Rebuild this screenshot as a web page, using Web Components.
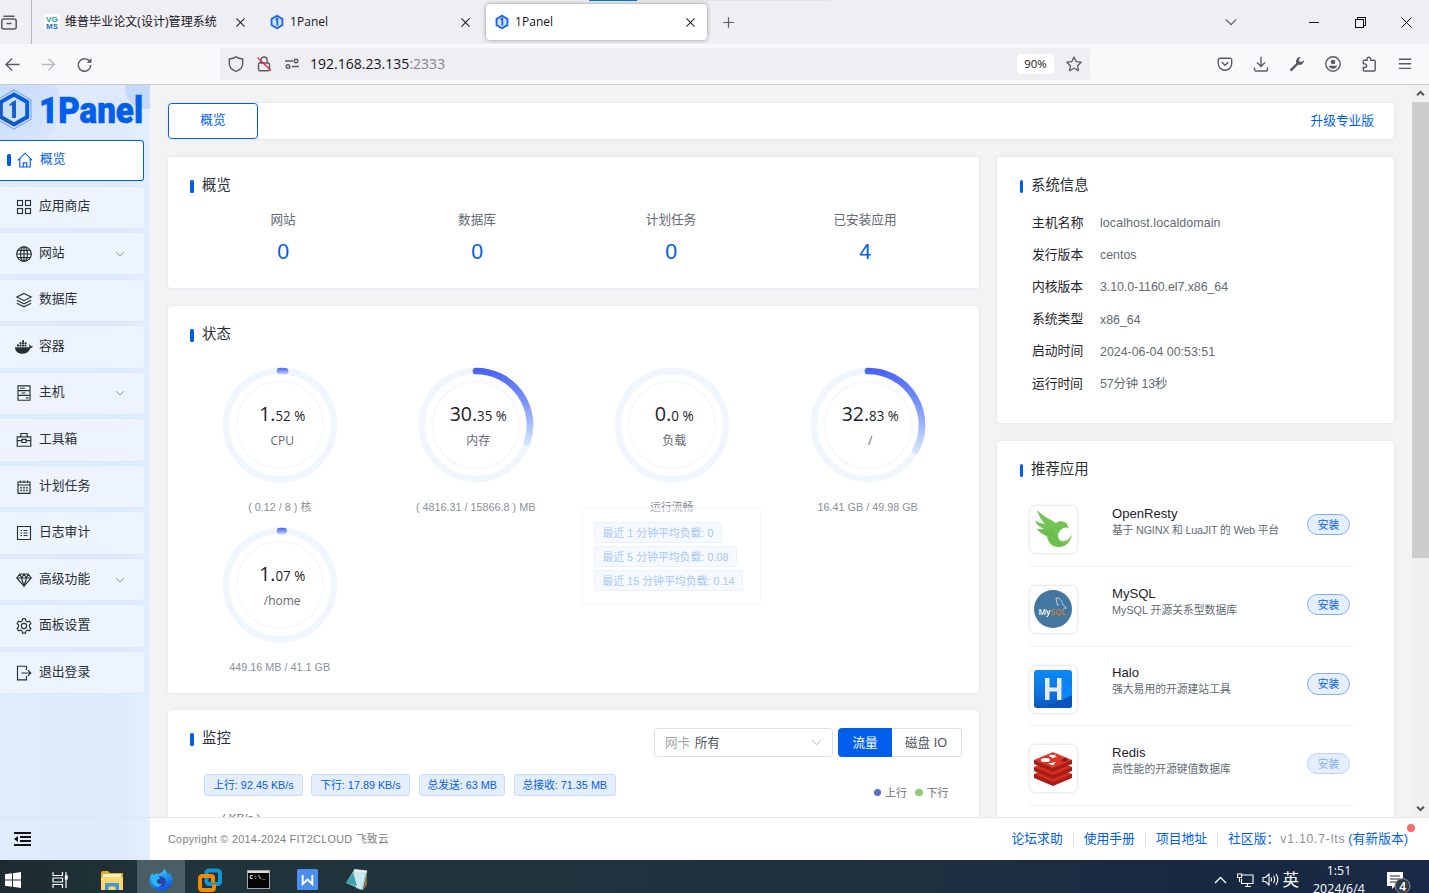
<!DOCTYPE html>
<html lang="zh-CN">
<head>
<meta charset="utf-8">
<title>1Panel</title>
<style>
html,body{margin:0;height:100%;overflow:hidden}
body{display:flex;flex-direction:column;height:893px;width:1429px;background:#f3f3f3;font:12.6px/1 "Liberation Sans","Noto Sans CJK SC",sans-serif;color:#1f2329}
</style>
</head>
<body>
<browser-tabs></browser-tabs>
<browser-toolbar></browser-toolbar>
<panel-app></panel-app>
<win-taskbar></win-taskbar>
<script>
const UI='"Open Sans","Noto Sans CJK SC",sans-serif';
class Base extends HTMLElement{
  connectedCallback(){
    if(this.shadowRoot)return;
    const t=document.createElement('template');
    t.innerHTML='<style>*{box-sizing:border-box}svg{display:block}'+this.css()+'</style>'+this.html();
    this.attachShadow({mode:'open'}).append(t.content.cloneNode(true));
  }
  a(n,d=''){return this.getAttribute(n)??d}
}
const define=(n,css,html)=>customElements.define(n,class extends Base{css(){return typeof css==='function'?css.call(this):css}html(){return html.call(this)}});

const ICONS={
  close:'<path d="M3 3l10 10M13 3L3 13" stroke-width="1.3"/>',
  plus:'<path d="M8 1.500v13M1.500 8h13"/>',
  chev:'<path d="M2 5l6 6 6-6"/>',
  view:'<rect x=".8" y="5" width="14.4" height="10" rx="2"/><path d="M2.5 2.2h11M5.5 9.5h5" />',
  back:'<path d="M15.500 8H1M7.700 1.500L1 8l6.700 6.500"/>',
  fwd:'<path d="M1 8h13.500M8 1.800L14.400 8 8 14.200"/>',
  reload:'<path d="M14 5.800A6.600 6.600 0 1 0 14.600 8.600"/><path d="M15.300 1.200v5h-5z" fill="currentColor" stroke="none"/>',
  shield:'<path d="M8 .9C6 2.300 3.600 2.800 1.300 3v4.500C1.300 11 4.500 14 8 15.300c3.500-1.300 6.700-4.300 6.700-7.800V3C12.400 2.800 10 2.300 8 .9z"/>',
  lock:'<rect x="2.500" y="7" width="11" height="7.800" rx="1.500"/><path d="M4.800 7V4.200a3.200 3.200 0 0 1 6.400 0V7"/><path d="M1.500 1.500l13.500 13" stroke="#e22850"/>',
  perm:'<path d="M1 5h8M8 10.500h7"/><circle cx="12" cy="5" r="1.800"/><circle cx="4" cy="10.500" r="1.800"/>',
  star:'<path d="M8 1l2.200 4.600 5 .6-3.700 3.500 1 5L8 12.200l-4.500 2.500 1-5L.8 6.200l5-.6z" stroke-linejoin="round"/>',
  pocket:'<path d="M3 2.200h10a1.700 1.700 0 0 1 1.700 1.700V7.500a6.700 6.700 0 0 1-13.400 0V3.900A1.700 1.700 0 0 1 3 2.200z"/><path d="M4.700 6.300L8 9.300l3.300-3" stroke-width="1.500"/>',
  down:'<path d="M8 .8v9.500M4 6.500l4 4 4-4M1.500 11.500v2q0 1.500 1.500 1.500h10q1.500 0 1.500-1.500v-2"/>',
  wrench:'<path d="M1.500 14.700L9 7.200" stroke-width="2.400"/><path d="M15 4.200a4.400 4.400 0 0 1-6 4.400L7.300 7A4.400 4.400 0 0 1 11.900 1L9.900 3.400l.5 2 2 .5z" fill="currentColor" stroke="none"/>',
  user:'<circle cx="8" cy="8" r="7.200"/><circle cx="8" cy="6" r="2.300" fill="currentColor" stroke="none"/><path d="M3.800 9.800h8.400q-1 3-4.200 3t-4.200-3z" fill="currentColor" stroke="none"/>',
  ext:'<path d="M6 4.200V3a1.800 1.800 0 0 1 3.600 0v1.200H13a1.200 1.200 0 0 1 1.200 1.200v8.400A1.200 1.200 0 0 1 13 15H3.500a1.200 1.200 0 0 1-1.200-1.200v-2.300h1.500a1.800 1.800 0 0 0 0-3.600H2.300V5.400a1.200 1.200 0 0 1 1.200-1.200z"/>',
  burger:'<path d="M1.800 3.200h12.400M1.800 7.800h12.400M1.800 12.400h12.400"/>',
  home:'<path d="M.8 8.300L8 1.200l7.200 7.100M2.800 6.500V15h10.400V6.500M6.300 15v-4.200h3.400V15"/>',
  grid:'<rect x="1.500" y="1.500" width="5" height="5"/><rect x="9.500" y="1.500" width="5" height="5"/><rect x="1.500" y="9.500" width="5" height="5"/><rect x="9.500" y="9.500" width="5" height="5"/>',
  globe:'<circle cx="8" cy="8" r="7.300"/><ellipse cx="8" cy="8" rx="3.500" ry="7.300"/><path d="M8 .7v14.600M.7 8h14.600M1.800 4.400h12.400M1.800 11.600h12.400"/>',
  layers:'<path d="M8 1.500l7.200 3.600L8 8.700.8 5.100zM.8 8.200L8 11.800l7.200-3.600M.8 11.200L8 14.800l7.200-3.600"/>',
  docker:'<path d="M-1 8.300h14.500c0-1-.7-2 0-3 1 .5 1.200 1.400 1.200 2 .8-.2 1.600-.1 2.200.3-.5 1.100-1.500 1.600-2.700 1.600C13 13 10.300 14.800 6.400 14.800 2 14.800-1 12.400-1 8.300z" fill="currentColor" stroke="none"/><path d="M1 5.500h2v2H1zM3.500 5.500h2v2h-2zM6 5.500h2v2H6zM8.500 5.500h2v2h-2zM3.500 3.300h2v1.700h-2zM6 3.300h2v1.700H6zM8.500 3.300h2v1.700h-2zM6 1.300h2V3H6z" fill="currentColor" stroke="none"/>',
  server:'<path d="M2 .8h12v14.400H2zM2 5.600h12M2 10.400h12M4 3.200h5M5.500 8h4M10 12.800h2.500"/>',
  box:'<path d="M1.200 4.800h13.600v9.400H1.200zM4.800 4.500V1.500h6.400v3M1.200 8.600h4.600M10.200 8.600h4.600M6 7.300h4v3.200H6z"/>',
  cal:'<path d="M2 3h12v11.300H2zM2 6h12M4.500 1.500V4M8 1.500V4M11.500 1.500V4"/><path d="M4.200 8.800h1.600M7.200 8.800h1.600M10.200 8.800h1.600M4.200 11.500h1.600M7.200 11.500h1.600M10.200 11.500h1.600" stroke-width="1.400"/>',
  log:'<path d="M1.500 1.500h13v13h-13z"/><path d="M4.500 5.500H6M7.500 5.500h4M4.500 8H6M7.500 8h4M4.500 10.500H6M7.500 10.500h4"/>',
  gem:'<path d="M3.800 2h8.400l3 4L8 14.200.8 6zM.8 6h14.400M3.800 2l1.700 4L8 14l2.500-8 1.700-4M5.500 6L8 2l2.500 4"/>',
  gear:'<path d="M6.600.9h2.800l.5 2.100 1.500.9 2.100-.7 1.400 2.400L13.400 7v2l1.500 1.400-1.400 2.400-2.100-.7-1.500.9-.5 2.100H6.600L6.100 13l-1.500-.9-2.100.7-1.400-2.400L2.600 9V7L1.100 5.600l1.400-2.400 2.100.7L6.100 3z"/><circle cx="8" cy="8" r="2.600"/>',
  exit:'<path d="M10.500 5V1.200h-9v13.600h9V11M5.500 8h9.300M12 5.200L14.800 8 12 10.800"/>',
  hex:'<path d="M8 .2l6.900 3.900v7.800L8 15.800l-6.900-3.900V4.100z" fill="#cfe0fa" stroke="none"/><path d="M8 1.800l5.400 3.100v6.200L8 14.200l-5.400-3.100V4.900z" stroke="#1663ea" stroke-width="1.700"/><path d="M6.500 5.500L8.300 4.600V11.500" stroke="#1663ea" stroke-width="1.800"/>'
};
define('ui-icon',function(){const s=this.a('s','16');return `:host{display:block;flex:none;width:${s}px;height:${s}px;overflow:visible}svg{overflow:visible}`},
 function(){const s=this.a('s','16');return `<svg width="${s}" height="${s}" viewBox="0 0 16 16" fill="none" stroke="currentColor" stroke-width="${this.a('w','1.2')}">${ICONS[this.a('n')]}</svg>`});

define('browser-tab',`:host{display:flex;align-items:center;height:36px;width:222px;border-radius:4px;padding:0 10px 0 9px;font:12px/16px ${UI};color:#15141a}
:host([active]){background:#fff;box-shadow:0 0 4px rgba(0,0,0,.4)}
span{flex:1;margin-left:5px;white-space:nowrap;letter-spacing:.05px}slot{display:block}ui-icon{color:#222}`,
 function(){return `<slot name="icon"><ui-icon n="hex" s="16"></ui-icon></slot><span><slot></slot></span><ui-icon n="close" s="13" w="1.4"></ui-icon>`});

define('vgms-icon',`:host{display:block;width:16px;height:16px;background:#fff;border-radius:3px}text{font:bold 8px "Liberation Sans",sans-serif}`,
 function(){return `<svg width="16" height="16"><text x="2" y="7.500" fill="#20a0a4" textLength="12" lengthAdjust="spacingAndGlyphs">VG</text><text x="2" y="14.500" fill="#2277c0" textLength="12" lengthAdjust="spacingAndGlyphs">MS</text></svg>`});

define('browser-tabs',`:host{display:flex;height:44px;flex:none;background:#efeef3;position:relative;align-items:center;color:#5b5b66}
.v{width:32px;height:44px;border-right:1px solid #b9b8be;display:flex;align-items:center;padding-left:1px;margin-right:3px}
.plus{margin-left:15px}.sp{flex:1}.w{color:#111;display:flex;margin-left:71px;margin-right:17px}
.w svg{shape-rendering:crispEdges}
.top{position:absolute;left:589px;top:0;width:241px;height:1px;background:#e2e2e4}.top i{display:block;width:48px;height:1px;background:#0078d7}
browser-tab+browser-tab{margin-left:3px}`,
 function(){return `<div class="top"><i></i></div><div class="v"><ui-icon n="view" s="16" w="1.500"></ui-icon></div>
<browser-tab style="width:222px">
<vgms-icon slot="icon"></vgms-icon>维普毕业论文(设计)管理系统</browser-tab><browser-tab>1Panel</browser-tab><browser-tab active style="margin-left:4px;width:221px;padding-left:8px">1Panel</browser-tab>
<ui-icon class="plus" n="plus" s="13" w="1.500"></ui-icon><div class="sp"></div><ui-icon n="chev" s="14" w="1.500"></ui-icon>
<div class="w"><svg width="10" height="11"><path d="M0 5.500h10" stroke="#111"/></svg><svg style="margin-left:36px" width="11" height="11" fill="none" stroke="#111"><path d="M.5 2.500h7.500v8H.5zM2.500 2.500v-2h8v8H8"/></svg><svg width="11" height="11" stroke="#111" style="shape-rendering:auto;margin-left:35px"><path d="M.5.5l10 10M10.500.5l-10 10"/></svg></div>`});

define('browser-toolbar',`:host{display:flex;height:40px;flex:none;background:#f9f9fb;border-bottom:1px solid #ccccd1;align-items:center;color:#5b5b66;padding:0 16px 0 5px}
.nav{display:flex;gap:20px;width:215px}.f{opacity:.4}
.url{display:flex;align-items:center;width:870px;height:32px;border-radius:4px;background:#efeef3;padding:0 8px;gap:12px;font:14px/20px ${UI};color:#15141a;box-sizing:border-box}
.url ui-icon{color:#5b5b66}.t{flex:1;margin-left:-2px;letter-spacing:.02px;margin-top:-1px}.t span{color:#85848d}
.z{background:#fff;border-radius:3px;width:37px;height:20px;font-size:11.300px;line-height:19px;text-align:center}
.r{margin-left:auto;display:flex;gap:20px;margin-right:0}`,
 function(){return `<div class="nav"><ui-icon n="back" s="15" w="1.500"></ui-icon><ui-icon class="f" n="fwd" s="15" w="1.500" style="margin-left:1px"></ui-icon><ui-icon n="reload" s="15" w="1.500" style="margin-left:1px"></ui-icon></div>
<div class="url"><ui-icon n="shield" w="1.400"></ui-icon><ui-icon n="lock" w="1.400"></ui-icon><ui-icon n="perm" w="1.400"></ui-icon><div class="t">192.168.23.135<span>:2333</span></div><div class="z">90%</div><ui-icon n="star" w="1.300"></ui-icon></div>
<div class="r">${['pocket','down','wrench','user','ext','burger'].map(n=>`<ui-icon n="${n}" w="1.400"></ui-icon>`).join('')}</div>`});

define('menu-item',`:host{display:flex;align-items:center;width:144px;height:41.400px;margin-bottom:5.160px;background:#edf4ff;border-radius:0 3.600px 3.600px 0;padding-left:16px;color:#2b2f36;box-shadow:0 0 3px rgba(0,94,235,.05)}
span{margin-left:7px;flex:1;font-size:12.800px;line-height:18px;position:relative;top:-1px}
.c{margin-right:19px;color:#60656e}
:host([active]){background:#fff;border:1px solid #005eeb;border-left:0;color:#005eeb;padding-left:7px;padding-bottom:1.500px}
:host([active]) ui-icon{margin-left:6px}i{display:none}:host([active]) i{display:block;width:4px;height:12px;border-radius:1.500px;background:#005eeb}`,
 function(){return `<i></i><ui-icon n="${this.a('icon')}" w="1.150"></ui-icon><span><slot></slot></span>${this.hasAttribute('sub')?'<ui-icon class="c" n="chev" s="10"></ui-icon>':''}`});

define('panel-logo',`:host{display:block;height:55px;width:150px}text{font:900 36px Roboto,"Open Sans",sans-serif}`,
 function(){return `<svg width="150" height="55"><defs><linearGradient id="c" x1="0" y1="0" x2="1" y2="1"><stop offset="0" stop-color="#b7d1fa"/><stop offset="1" stop-color="#dfeafc"/></linearGradient><linearGradient id="h" x1="1" y1="0" x2="0" y2="1"><stop offset="0" stop-color="#005eeb"/><stop offset="1" stop-color="#1858b8"/></linearGradient></defs>
<circle cx="5" cy="19" r="55" fill="url(#c)"/><circle cx="146" cy="3" r="21" fill="#c5dafb"/>
<path d="M14 5l17 9.800v19.400L14 44-3 34.200V14.800z" fill="none" stroke="#7fabf3" stroke-width="1.200"/>
<path d="M14 9.500l13.200 7.500v15L14 39.500.8 32V17z" fill="none" stroke="url(#h)" stroke-width="4"/>
<path d="M9.500 19.500l2.500-2.500 4-2v18h-4V20l-2.500 1z" fill="#1a5fcc"/>
<text x="39" y="38" textLength="104" lengthAdjust="spacingAndGlyphs" fill="#005eeb" stroke="#005eeb" stroke-width=".6" stroke-linejoin="round">1Panel</text></svg>`});

define('panel-sidebar',`:host{display:flex;flex-direction:column;width:150px;height:775px;flex:none;background:linear-gradient(90deg,#e0ecfe,#deeafc 80%,#e4eefd)}
.b{margin-top:auto;height:43px;border-top:1px solid #d6e4fa;padding:14px 0 0 14px}`,
 function(){const m=[['home','概览','active'],['grid','应用商店'],['globe','网站','sub'],['layers','数据库'],['docker','容器'],['server','主机','sub'],['box','工具箱'],['cal','计划任务'],['log','日志审计'],['gem','高级功能','sub'],['gear','面板设置'],['exit','退出登录']];
 return `<panel-logo></panel-logo>${m.map(([i,t,f=''])=>`<menu-item icon="${i}" ${f}>${t}</menu-item>`).join('')}<div class="b"><svg width="17" height="14" stroke="#111" stroke-width="2"><path d="M0 1h17M6 5h11M6 9h11M0 13h17"/><path d="M0 7l4-3v6z" fill="#111" stroke="none"/></svg></div>`});

define('panel-card',`:host{display:block;background:#fff;border-radius:3.600px;box-shadow:0 0 3px rgba(0,94,235,.13);flex:none;position:relative}
header{display:flex;align-items:center;height:57px;padding-left:22px}
:host([narrow]) header{padding-left:23px}:host([narrow]) i{width:3px}
i{width:4px;height:13px;background:#005eeb;border-radius:1.500px;margin-right:8px;position:relative;top:1px}
b{font-weight:400;font-size:14.400px;line-height:20px;color:#2b2f36;margin-top:-1px}.x{margin-left:auto;display:flex}`,
 function(){return `<header><i></i><b>${this.a('title-text')}</b><div class="x"><slot name="extra"></slot></div></header><slot></slot>`});

define('stat-item',`:host{display:flex;flex-direction:column;align-items:center;width:194px}.l{line-height:18px;color:#646a73;margin-top:-3px}.v{font-size:22px;line-height:26px;color:#005eeb;margin-top:10px;transform:scaleX(.97)}`,
 function(){return `<div class="l">${this.a('label')}</div><div class="v"><slot></slot></div>`});

define('ring-gauge',`:host{display:flex;flex-direction:column;align-items:center;width:196px;height:160.200px;position:relative}
.big{font:20.500px ${UI};fill:#1f2329}.sm{font-size:14px}.n{font:12px ${UI};fill:#646a73}
.c{font-size:10.800px;line-height:16px;color:#8a9099;margin-top:14px;white-space:nowrap}`,
 function(){const v=+this.a('value'),r=54,cx=60,cy=60,ang=Math.max(v,0)/100*2*Math.PI,ex=cx+r*Math.sin(ang),ey=cy-r*Math.cos(ang),[p,q]=this.a('value').split('.'),w=+this.a('tw');
 const arc=v>0?`<path d="M${cx} ${cy-r}A${r} ${r} 0 0 1 ${ex} ${ey}" fill="none" stroke="url(#g)" stroke-width="6.700" stroke-linecap="round"/>`:'';
 const top=2.500,bot=Math.max(ey+3,10);
 return `<svg width="120" height="120" style="overflow:visible"><defs><linearGradient id="g" gradientUnits="userSpaceOnUse" x1="0" x2="0" y1="${top}" y2="${bot}"><stop offset="0" stop-color="#4560f6"/><stop offset=".45" stop-color="#7c95fa"/><stop offset="1" stop-color="#d8e9fe"/></linearGradient>
<radialGradient id="k" gradientUnits="userSpaceOnUse" cx="60" cy="60" r="46"><stop offset=".91" stop-color="#fff"/><stop offset=".94" stop-color="#f3f7fe"/><stop offset=".97" stop-color="#fbfcff"/><stop offset="1" stop-color="#fff"/></radialGradient></defs>
<circle cx="60" cy="60" r="46" fill="url(#k)"/><circle cx="60" cy="60" r="${r}" fill="none" stroke="#f0f6fe" stroke-width="6.500"/>${arc}
<text class="big" x="62.200" y="56" text-anchor="middle" textLength="${w}" lengthAdjust="spacingAndGlyphs">${p}.<tspan class="sm">${q} %</tspan></text><text class="n" x="62.200" y="80" text-anchor="middle">${this.a('name')}</text></svg><div class="c"><slot></slot></div>`});

define('soft-tag',`:host{display:inline-flex;align-items:center;justify-content:center;height:22px;border:1px solid #c8dcfb;background:#e5eefd;border-radius:3px;color:#005eeb;font-size:10.800px;line-height:14px;white-space:nowrap}`,function(){return '<slot></slot>'});

define('load-popover',`:host{position:absolute;left:414px;top:202px;width:179px;height:96px;border:1px solid #f3f5fa;border-radius:3px;background:rgba(255,255,255,.3);box-shadow:0 0 6px rgba(0,0,0,.015);padding:13px 11px 0;display:flex;flex-direction:column;align-items:flex-start;gap:2.500px}
soft-tag{flex:none;background:#f6faff;border-color:#eaf2fe;color:#a6c7fa;height:21.600px;letter-spacing:.05px;padding-top:1px}`,
 function(){return `<soft-tag style="width:128px">最近 1 分钟平均负载: 0</soft-tag><soft-tag style="width:143px">最近 5 分钟平均负载: 0.08</soft-tag><soft-tag style="width:149px">最近 15 分钟平均负载: 0.14</soft-tag>`});

define('info-row',`:host{display:flex;align-items:center;height:32.200px;padding-left:35px;color:#646a73;line-height:18px}b{font-weight:400;width:68px;color:#1f2329;font-size:12.800px;margin-top:-1px}span{font-size:12.400px}`,
 function(){return `<b>${this.a('label')}</b><span><slot></slot></span>`});

const APPS={
 openresty:`<path d="M4 1C12 9 19 11 23 14c3-3 9-2 11 1l1.500 4-2.500-.5c-6 1-8 5-8 9 .5 4.500 6 7 11 2l3-4c-1.500 8-7 12.500-13 12.500C18 38 15 33 14 27 9 25 5 22 4 19.500c3 1 5 1 7 .5C6 18 3 15 2 11.500c4 2.500 7 3 10 3.500C8 11 5 5 4 1z" fill="#74c355"/><path d="M4 19.500c5 2 11 1 15-1l6 10c1 5 4 7 8 7-6 4-16 3-19-8.500C9 25 5 22 4 19.500z" fill="#67b748" opacity=".45"/>`,
 mysql:`<circle cx="20" cy="20" r="19" fill="#43779f"/><text x="5.500" y="25.500" fill="#fff" font-family="Open Sans,sans-serif" font-weight="600" font-size="9.500" textLength="12" lengthAdjust="spacingAndGlyphs">My</text><text x="17.800" y="25.500" fill="#cf8136" font-family="Open Sans,sans-serif" font-weight="600" font-size="9.500" textLength="15" lengthAdjust="spacingAndGlyphs">SQL</text><path d="M23 9c4-.5 6 3 7 7l3.500 3-3 .2M23 9c.5 3 1 5 1.500 7.500l2-1.500" fill="none" stroke="#d5e2ee" stroke-width=".8"/>`,
 halo:`<defs><linearGradient id="g" x2="0" y2="1"><stop offset="0" stop-color="#0b8af2"/><stop offset=".6" stop-color="#0d74e2"/><stop offset="1" stop-color="#0a55bd"/></linearGradient></defs><rect x="1" y="1" width="38" height="38" rx="3" fill="url(#g)"/><path d="M39 26L10 39h26q3 0 3-3z" fill="#0a55bd"/><path d="M29 9l10 8v9l-10 5z" fill="#0a86fa"/><path d="M12 9h4.500v9.500h7.500V9h4.500v22H24v-8.500h-7.500V31H12z" fill="#e6ebf2"/>`,
 redis:`<path d="M1 26v4l19 8 19-8v-4z" fill="#a51f18"/><path d="M1 26l19 8 19-8-19-8z" fill="#d82c20"/><path d="M1 19v4l19 8 19-8v-4z" fill="#a51f18"/><path d="M1 19l19 8 19-8-19-8z" fill="#d82c20"/><path d="M1 12v4l19 8 19-8v-4z" fill="#a51f18"/><path d="M1 12l18-7.500q1-.5 2 0L39 12l-19 8z" fill="#dd3529"/><ellipse cx="12.500" cy="12" rx="4.700" ry="2" fill="#fff"/><path d="M17 6.500l3 .8 3-1-1 1.800 2 1-3 .3-2 1.200-.5-1.500-2.500-.4zM15 15.500l8-1.500-3 3.500z" fill="#fff"/><path d="M28 12l5-2.500 2 2.500-4 2z" fill="#8a1a12"/>`
};
define('app-row',`:host{display:flex;height:79.700px;width:325px;margin-left:32px;border-bottom:1px solid #eff0f2;padding-top:18px}
:host([first]){height:69px;padding-top:7px}:host([first]) .d{letter-spacing:-.19px}
.i{width:49px;height:49px;border-radius:7px;border:1px solid #ececec;box-shadow:0 0 3px rgba(0,0,0,.08);display:flex;align-items:center;justify-content:center;flex:none;padding:0 1px 1px 0}
.m{margin-left:34px;flex:1;padding-top:.500px;white-space:nowrap}.t{font-size:13.100px;line-height:16px}.d{font-size:10.800px;line-height:17.500px;color:#646a73}
button{all:unset;box-sizing:border-box;width:43px;height:21.500px;margin:8.500px 4px 0 0;border-radius:11px;border:1px solid #80aff5;background:#e5eefd;color:#005eeb;font-size:10.800px;line-height:20.500px;text-align:center}
:host([disabled]) button{border-color:#b9d3fa;color:#80aff5}`,
 function(){return `<div class="i"><svg width="40" height="40" style="flex:none">${APPS[this.a('icon')]}</svg></div><div class="m"><div class="t">${this.a('name')}</div><div class="d"><slot></slot></div></div><button>安装</button>`});

define('net-controls',`:host{display:flex;margin-right:17px;margin-top:8px}
div{height:29px;border:1px solid #dcdfe6;display:flex;align-items:center;white-space:nowrap;line-height:18px;color:#51565f}
.s{width:179px;border-radius:3.600px;padding:0 10px 0 10px;margin-right:5px}.s em{font-style:normal;color:#a2a6ad;margin-right:4.500px}.s ui-icon{margin-left:auto;color:#a8abb2}
.p{width:54px;justify-content:center;background:#005eeb;border-color:#005eeb;color:#fff;border-radius:3.600px 0 0 3.600px}.q{width:70px;justify-content:center;border-left:0;border-radius:0 3.600px 3.600px 0;padding-right:1px}`,
 function(){return `<div class="s"><em>网卡</em>所有<ui-icon n="chev" s="11" w="1.300"></ui-icon></div><div class="p">流量</div><div class="q">磁盘 IO</div>`});

define('scroll-bar',`:host{width:17px;height:732px;background:#f0f0f0;display:flex;flex-direction:column;color:#505050;flex:none}
.t{height:456px;background:#cdcdcd}.c{height:17px;display:flex;align-items:center;justify-content:center}.d{margin-top:auto}`,
 function(){return `<div class="c"><ui-icon n="chev" s="9" w="3.500" style="transform:rotate(180deg)"></ui-icon></div><div class="t"></div><div class="c d"><ui-icon n="chev" s="9" w="3.500"></ui-icon></div>`});

define('panel-footer',`:host{display:flex;align-items:center;height:43px;background:#fff;border-top:1px solid #e4e7ed;padding:0 21px 0 18px;line-height:18px;flex:none}
.c{font-size:10.800px;color:#808080;letter-spacing:.31px;flex:1}.a{color:#005eeb;font-size:12.800px}.s{width:1px;height:14px;background:#dcdfe6;margin:0 10px}
.v{color:#8b8f96;letter-spacing:.8px;margin:0 2px 0 1px;font-size:12.200px}.n{position:relative;margin-left:1px}.n i{position:absolute;width:8px;height:8px;border-radius:50%;background:#f56c6c;right:-7px;top:-6px}`,
 function(){return `<span class="c">Copyright © 2014-2024 FIT2CLOUD 飞致云</span><span class="a">论坛求助</span><span class="s"></span><span class="a">使用手册</span><span class="s"></span><span class="a">项目地址</span><span class="s"></span><span class="a">社区版：</span><span class="v">v1.10.7-lts</span><span class="a n">(有新版本)<i></i></span>`});

define('panel-app',`:host{display:flex;height:775px;flex:none}
.r{flex:1;display:flex;flex-direction:column;min-width:0}.sc{display:flex;height:732px;overflow:hidden}
main{flex:1;padding:18px 18px 0;background:#f3f3f3}
.bar{height:36px;background:#fff;border-radius:3.600px;box-shadow:0 0 3px rgba(0,94,235,.13);display:flex;align-items:center;justify-content:space-between;padding-right:20px;color:#005eeb;line-height:18px;font-size:12.700px}
.tab{width:90px;height:36px;border:1px solid #005eeb;border-radius:3.600px;display:flex;align-items:center;justify-content:center;padding-bottom:2px}
.cols{display:flex;gap:18px;margin-top:18px}.l{width:811px;display:flex;flex-direction:column;gap:17.500px}.rr{width:397px;display:flex;flex-direction:column;gap:18px}
.st{display:flex;padding-left:18px}.g{display:flex;flex-wrap:wrap;padding-left:13.700px;padding-top:2.300px}
.tags{display:flex;gap:8.600px;padding:7px 0 0 36px}.lg{display:flex;justify-content:flex-end;align-items:center;font:11px/16px ${UI};color:#6e7079;padding-right:30.500px;margin-top:-11.500px}
.lg i{width:7.500px;height:7.500px;border-radius:50%;margin:0 4px 0 8px}.u{font-size:11.500px;line-height:16px;color:#6e7079;margin:9px 0 0 54px}`,
 function(){return `<panel-sidebar></panel-sidebar><div class="r"><div class="sc"><main>
<div class="bar"><div class="tab">概览</div><span>升级专业版</span></div>
<div class="cols"><div class="l">
<panel-card title-text="概览" style="height:131px"><div class="st"><stat-item label="网站">0</stat-item><stat-item label="数据库">0</stat-item><stat-item label="计划任务">0</stat-item><stat-item label="已安装应用">4</stat-item></div></panel-card>
<panel-card title-text="状态" style="height:387px"><div class="g">
<ring-gauge value="1.52" name="CPU" tw="46">( 0.12 / 8 ) 核</ring-gauge><ring-gauge value="30.35" name="内存" tw="57">( 4816.31 / 15866.8 ) MB</ring-gauge><ring-gauge value="0.0" name="负载" tw="39">运行流畅</ring-gauge><ring-gauge value="32.83" name="/" tw="57">16.41 GB / 49.98 GB</ring-gauge><ring-gauge value="1.07" name="/home" tw="46">449.16 MB / 41.1 GB</ring-gauge></div><load-popover></load-popover></panel-card>
<panel-card title-text="监控" style="height:300px"><net-controls slot="extra"></net-controls><div class="tags"><soft-tag style="width:99px">上行: 92.45 KB/s</soft-tag><soft-tag style="width:99px;margin:0 .600px 0 -.600px">下行: 17.89 KB/s</soft-tag><soft-tag style="width:86px">总发送: 63 MB</soft-tag><soft-tag style="width:102px">总接收: 71.35 MB</soft-tag></div><div class="lg"><i style="background:#5470c6"></i>上行<i style="background:#91cc75"></i>下行</div><div class="u">( KB/s )</div></panel-card>
</div><div class="rr">
<panel-card narrow title-text="系统信息" style="height:266px"><div style="margin-top:-7px"><info-row label="主机名称" style="letter-spacing:.1px">localhost.localdomain</info-row><info-row label="发行版本">centos</info-row><info-row label="内核版本" style="letter-spacing:-.06px">3.10.0-1160.el7.x86_64</info-row><info-row label="系统类型">x86_64</info-row><info-row label="启动时间">2024-06-04 00:53:51</info-row><info-row label="运行时间" style="letter-spacing:-.1px">57分钟 13秒</info-row></div></panel-card>
<panel-card narrow title-text="推荐应用" style="height:500px"><app-row first icon="openresty" name="OpenResty">基于 NGINX 和 LuaJIT 的 Web 平台</app-row><app-row icon="mysql" name="MySQL">MySQL 开源关系型数据库</app-row><app-row icon="halo" name="Halo">强大易用的开源建站工具</app-row><app-row icon="redis" name="Redis" disabled>高性能的开源键值数据库</app-row></panel-card>
</div></div></main><scroll-bar></scroll-bar></div><panel-footer></panel-footer></div>`});

define('win-taskbar',`:host{display:flex;height:33px;flex:none;background:linear-gradient(90deg,#1c2b31,#21343b 12%,#20343e 38%,#1f2f40 65%,#192841 85%,#1a2945);overflow:hidden;color:#fff;font:12.500px/18px ${UI}}
.i{width:49px;height:33px;flex:none;display:flex;justify-content:center;padding-top:8px}.on{background:#4b5e66}
.t{margin-left:auto;display:flex;gap:8px;padding-top:11px}.t svg{overflow:visible}
.k{width:62px;text-align:center;padding-top:2px;font-size:12.300px;line-height:18px;margin:0 17px 0 9px;letter-spacing:.1px}.n{width:42px;padding-top:12px}
.e{font:16.500px/17px "Noto Sans CJK SC",sans-serif;margin-left:-5px}`,
 function(){return `<div class="i" style="width:26px;padding-top:12px"><svg width="16" height="16" fill="#fff"><path d="M0 2.300L7 1.300v6.200H0zM8 1.200L16 0v7.500H8zM0 8.500h7v6.200l-7-1zM8 8.500h8V16l-8-1.200z"/></svg></div>
<div class="i" style="margin:0 13px 0 10px;padding-top:12px"><svg width="17" height="16" fill="none" stroke="#fff" stroke-width="1.200"><path d="M1 0v3.500h9.500V0M1 16v-3.500h9.500V16M1 6h9.500v4H1zM14 0v16"/><path d="M12.800 3.500h3v4h-3z" fill="#fff" stroke="none"/></svg></div>
<div class="i" style="width:39px;padding:11px 12px 0 0"><svg width="22" height="20" viewBox="0 0 22 20" style="overflow:visible"><path d="M0 2q0-2 2-2h5l2 2h13v17H0z" fill="#e9a825"/><path d="M2 3h18v6H2z" fill="#fff3c8"/><path d="M0 6h22v13H0z" fill="#fcd66b"/><path d="M4 19v-6q0-1 1-1h12q1 0 1 1v6h-3.500v-3.500h-7V19z" fill="#3b97d8"/></svg></div>
<div class="i on" style="width:48px"><svg width="24" height="24" viewBox="0 0 24 24"><defs><linearGradient id="f" x2=".4" y2="1"><stop offset="0" stop-color="#59e4fb"/><stop offset=".5" stop-color="#15a0f6"/><stop offset="1" stop-color="#1457d8"/></linearGradient></defs><path d="M15 1c3 3 3.500 4.500 3.800 6L20.500 5c2 3 3 5 3 8A11.500 11.500 0 0 1 .8 14C.3 9.500 2 7 3.500 5l.8 2.500C7 5 8 5.500 9.500 6 12 5 14 4 15 1z" fill="url(#f)"/><circle cx="11.500" cy="13.500" r="5.300" fill="#3040a8"/><path d="M3.500 10c2-2 5-2 8 0l-3.500 2c-1 3 2 5 5 3.500-1 3-4.500 4-7 2.500s-3.500-5-2.500-8z" fill="#2cb8f8"/></svg></div>
<div class="i" style="padding-top:8px"><svg width="24" height="24" fill="none" stroke-width="4"><rect x="8.500" y="2.500" width="13.500" height="13.500" rx="2.500" stroke="#1296d3"/><path d="M15 14.500V9.500q0-1.500-1.500-1.500H4.500Q2 8 2 10.500v9q0 2.500 2.500 2.500h9q2.500 0 2.500-2.500v-3" stroke="#f38b00"/></svg></div>
<div class="i" style="padding-top:10px"><svg width="23" height="19"><rect x=".5" y=".5" width="22" height="18" fill="#050505" stroke="#a5a8aa"/><path d="M1 2h21" stroke="#ddd" stroke-width="2"/><text x="2.500" y="9" fill="#fff" font-family="Liberation Mono,monospace" font-weight="bold" font-size="6" textLength="16">C:\\_</text></svg></div>
<div class="i" style="padding-top:9px"><svg width="21" height="21"><rect width="21" height="21" rx="1.500" fill="#4a8ef2"/><path d="M5.700 6v9l4.800-4.500 4.800 4.500V6" fill="none" stroke="#fff" stroke-width="1.900"/></svg></div>
<div class="i" style="padding-top:8px"><svg width="24" height="24"><path d="M9 2l13 2-4 18L1 15z" fill="#9bd5de"/><path d="M9 2l12 1-5 19-5-2z" fill="#dff1f3" opacity=".7"/><path d="M1 15L8 5l4 13z" fill="#3c9fab"/><path d="M22 4v13l-4 5z" fill="#9b6b35"/><path d="M9 2l13 1.500" stroke="#eee" stroke-width="2"/></svg></div>
<div class="t"><svg width="13" height="16" fill="none" stroke="#fff" stroke-width="1.300"><path d="M1 12l5.500-5.500L12 12"/></svg><svg style="margin-left:2px" width="17" height="16" fill="none" stroke="#fff" stroke-width="1.100"><path d="M4.500 4H16v8.500H4.500V8M8 15.500h6M10.500 12.500v3M.6 3h4v3.500H.600zM2.500 6.500V11"/></svg><svg width="18" height="16" fill="none" stroke="#fff" stroke-width="1.100"><path d="M1 6.500h2.500L7 3v11L3.500 10.500H1zM9 6.500q1 2 0 4M11.500 4.800q2.200 3.500 0 7.200M14 3q3.500 5.500 0 11"/></svg><span class="e">英</span></div>
<div class="k">1:51<br>2024/6/4</div><div class="n"><svg width="26" height="24" style="overflow:visible"><path d="M0 0h16v14H8l-3 3v-3H0z" fill="#fff"/><path d="M3 4h10M3 7h10M3 10h10" stroke="#1a2945"/><circle cx="15.500" cy="14" r="7.500" fill="#353b45" stroke="#8a919c"/><text x="12.200" y="18.500" fill="#fff" font-size="12" font-weight="600">4</text></svg></div>`});
</script>
</body>
</html>
